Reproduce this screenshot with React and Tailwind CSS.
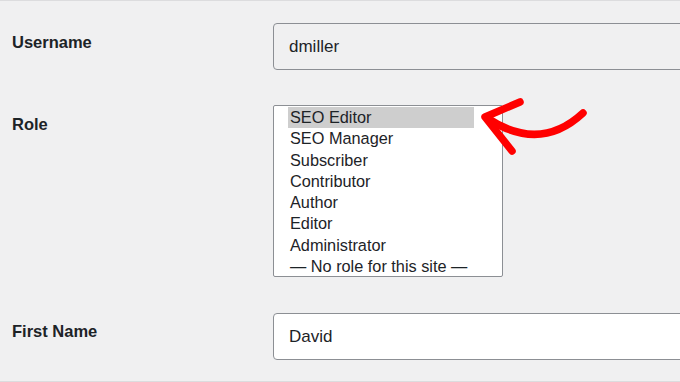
import React from "react";

const roles = [
  "SEO Editor",
  "SEO Manager",
  "Subscriber",
  "Contributor",
  "Author",
  "Editor",
  "Administrator",
  "— No role for this site —",
];

export default function App() {
  return (
    <div
      className="relative w-[680px] h-[382px] overflow-hidden bg-[#f0f0f1] border-t border-b border-[#dcdcde] text-[#1d2327]"
      style={{ fontFamily: '"Liberation Sans", Arial, sans-serif' }}
    >
      <div className="flex flex-col pl-[12px] pt-[22px]">
        {/* Username */}
        <div className="flex">
          <div className="w-[261px] shrink-0 pt-[9px] text-[16.5px] leading-[20px] font-bold">Username</div>
          <div className="w-[430px] h-[47px] shrink-0 flex items-center pl-[15px] border border-[#8c8f94] rounded-[4px] bg-[#f0f0f1] text-[17px]">
            dmiller
          </div>
        </div>
        {/* Role */}
        <div className="flex mt-[35px]">
          <div className="w-[261px] shrink-0 pt-[9px] text-[16.5px] leading-[20px] font-bold">Role</div>
          <div className="w-[230px] h-[172px] shrink-0 border border-[#8c8f94] rounded-[2px] bg-white pt-[1px] pl-[14px] pr-[28px] text-[16.3px]">
            {roles.map((r, i) => (
              <div
                key={r}
                className={
                  "h-[21.3px] leading-[21.3px] pl-[2px] whitespace-nowrap " +
                  (i === 0 ? "bg-[#cecece]" : "")
                }
              >
                {r}
              </div>
            ))}
          </div>
        </div>
        {/* First Name */}
        <div className="flex mt-[36px]">
          <div className="w-[261px] shrink-0 pt-[8px] text-[16.5px] leading-[20px] font-bold">First Name</div>
          <div className="w-[430px] h-[47px] shrink-0 flex items-center pl-[15px] border border-[#8c8f94] rounded-[4px] bg-white text-[17px]">
            David
          </div>
        </div>
      </div>

      <svg
        className="absolute left-0 top-0 pointer-events-none"
        width="680"
        height="382"
        viewBox="0 0 680 382"
      >
        <path
          d="M487 117 Q540 152 583 112"
          fill="none"
          stroke="#ff0000"
          strokeWidth="7.5"
          strokeLinecap="round"
        />
        <path
          d="M520 101 L485 116 L512 150"
          fill="none"
          stroke="#ff0000"
          strokeWidth="7.5"
          strokeLinecap="round"
          strokeLinejoin="round"
        />
      </svg>
    </div>
  );
}
